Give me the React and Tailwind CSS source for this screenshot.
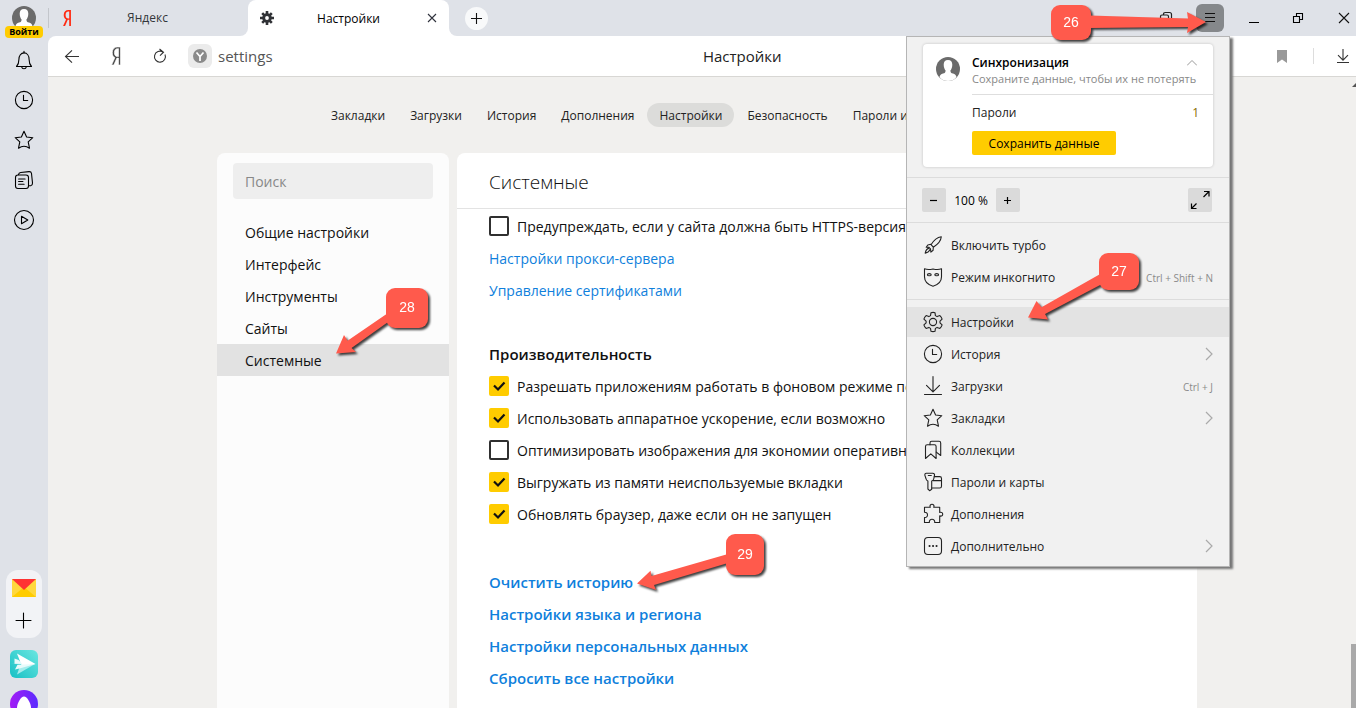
import React from "react";
import { FaYandex } from "react-icons/fa";

function Icon({ size = 24, width = 1.1, className = "", children }) {
  return (
    <svg
      width={size}
      height={size}
      viewBox="0 0 24 24"
      fill="none"
      stroke="currentColor"
      strokeWidth={width}
      strokeLinejoin="round"
      strokeLinecap="round"
      className={"shrink-0 " + className}
      aria-hidden="true"
    >
      {children}
    </svg>
  );
}

const starPath =
  "M12 3.2l2.600 5.800 6.200.700-4.600 4.200 1.300 6.300c-1.800-1.300-3.500-2-5.500-2s-3.700.700-5.500 2l1.300-6.300-4.600-4.200 6.200-.700z";

const BellIcon = () => (
  <Icon>
    <path d="M4.500 18.500c1.700-1.800 2.400-3.200 2.400-7.100C6.900 7.600 9 4.900 12 4.900s5.100 2.700 5.100 6.500c0 3.900.7 5.300 2.400 7.100z" />
    <path d="M12 3.300v1.500M9.700 18.800c.2 1.300 1.100 2 2.300 2s2.100-.7 2.300-2" />
  </Icon>
);
const ClockIcon = () => (
  <Icon>
    <circle cx="12" cy="12" r="8.6" />
    <path d="M11.500 7.200v5.300h4.200" />
  </Icon>
);
const StarIcon = () => (
  <Icon>
    <path d={starPath} />
  </Icon>
);
const NotesIcon = () => (
  <Icon>
    <rect x="3.500" y="7" width="13" height="13.500" rx="2.500" />
    <path d="M6.500 6.700c.3-1.700 1-2 2.200-2.200l8.300-.9c1.600-.1 2.300.5 2.500 1.900l1 9.500c.1 1.700-.5 2.400-1.800 2.700h-1.600M6.600 11h6.500M6.600 13.500h4.300M6.600 16.200h5.500" />
  </Icon>
);
const PlayIcon = () => (
  <Icon>
    <circle cx="12" cy="12" r="9.5" />
    <path d="M9.500 8.300l6.300 3.700-6.300 3.700z" />
  </Icon>
);
const RocketIcon = () => (
  <Icon>
    <path d="M20.300 3.700c-4.300.6-7.600 3.600-10.300 8l2.300 2.500c4.600-2.900 7.600-6.200 8-10.500zM9.800 11.300l-3 .7-1.600 2.300 2.900.1M12.300 14.300l-.2 3-2.200 1.800-.4-3.300M8 14.400l1.500 1.400M7.600 15.400c-1.700.4-2.800 2.200-3.400 4.700 2.400-.6 4.100-1.700 4.700-3.500" />
  </Icon>
);
const MaskIcon = () => (
  <Icon>
    <path d="M3.500 3.800c2.500 1 5 1 8.500.2 3.500.8 6 .8 8.500-.2v8c0 4.500-3.500 8-8.500 9.400-5-1.400-8.500-4.900-8.500-9.400z" />
    <ellipse cx="8.300" cy="9.700" rx="1.900" ry="1.100" />
    <ellipse cx="15.700" cy="9.700" rx="1.900" ry="1.100" />
  </Icon>
);
const GearIcon = () => (
  <Icon>
    <circle cx="12" cy="12" r="3.600" />
    <path d="M10 2.700c1.300-.4 2.900-.4 4 0l.4 2.900 1.700 1 2.800-1c1 .9 1.800 2.100 2.200 3.500L19 11.200v1.700l2.100 2c-.4 1.400-1.200 2.600-2.200 3.500l-2.800-1-1.700 1-.4 2.900c-1.300.4-2.700.4-4 0l-.5-2.900-1.600-1-2.800 1c-1-.9-1.800-2.100-2.200-3.500l2.200-2v-1.700l-2.200-2.100c.4-1.400 1.200-2.600 2.200-3.500l2.800 1 1.600-1z" />
  </Icon>
);
const DownloadIcon = () => (
  <Icon>
    <path d="M12 2.500v15M5.500 11.300l6.500 6.500 6.500-6.500M3.500 20.500h17" />
  </Icon>
);
const CollectionsIcon = () => (
  <Icon>
    <path d="M4.500 20.500V8.500c0-1 .6-1.700 1.700-1.700h7.300c1 0 1.600.7 1.600 1.700v12l-5.300-4.600z" />
    <path d="M9 6.800V4.900c0-1.100.6-1.700 1.700-1.700h7.300c1.100 0 1.700.6 1.700 1.700v12.600l-4.400-3.400" />
  </Icon>
);
const KeyIcon = () => (
  <Icon>
    <path d="M5.300 3.200h6.500c1.300 0 1.900.9 1.700 2.100l-.8 3.700c-.2 1-1 1.700-2 2v8.300L8.600 20.700 6.900 19V11c-1-.3-1.600-1-1.800-2l-1.200-3.700c-.2-1.200.3-2.100 1.400-2.100zM7.300 5.500h3" />
    <path d="M13.300 6.600h5.400c1.200 0 1.800.7 1.800 1.800v7.800c0 1.200-.6 1.800-1.800 1.800h-8M12 10.600h8.300" />
  </Icon>
);
const PuzzleIcon = () => (
  <Icon>
    <path d="M3.500 5.200h5.800c-.8-1.600.3-2.900 1.700-2.900s2.500 1.300 1.700 2.900h6v5.200c2-.6 3 .5 3 1.800s-1 2.300-3 1.700v6.600h-5c.3-2-1-3.200-2.700-3.200s-2.900 1.200-2.600 3.200H3.500v-5c1.900.2 3-1 3-2.600s-1.100-2.700-3-2.600z" />
  </Icon>
);
const MoreIcon = () => (
  <Icon>
    <rect x="3.500" y="3.500" width="17" height="17" rx="3.500" />
    <path d="M8.500 12h.1M12 12h.1M15.500 12h.1" strokeWidth="2" />
  </Icon>
);

function Avatar() {
  return (
    <svg width="24" height="24" viewBox="0 0 24 24" className="shrink-0" aria-hidden="true">
      <defs>
        <clipPath id="face">
          <circle cx="12" cy="12" r="12" />
        </clipPath>
      </defs>
      <g clipPath="url(#face)">
        <rect width="24" height="24" fill="#6b6b6b" />
        <path
          d="M12 3c3 0 4.300 2 4.300 4.700 0 2.600-.8 4.500-1.900 5.700.1 2 .8 2.600 2.600 3.200 2 .7 3 1.500 3.500 3.400L17 24H7l-3.500-4c.5-1.900 1.500-2.700 3.500-3.400 1.800-.6 2.500-1.200 2.600-3.200-1.100-1.200-1.900-3.100-1.900-5.700C7.700 5 9 3 12 3z"
          fill="#fff"
        />
      </g>
    </svg>
  );
}

function SideBar() {
  const items = [
    ["Уведомления", BellIcon],
    ["История", ClockIcon],
    ["Закладки", StarIcon],
    ["Заметки", NotesIcon],
    ["Видео", PlayIcon],
  ];
  return (
    <aside className="flex w-12 shrink-0 flex-col items-center">
      <button className="flex h-10 flex-col items-center pt-1.5">
        <Avatar />
        <span className="-mt-1 rounded bg-[#ffcc00] px-1 text-[9px] leading-3 font-bold text-black">
          Войти
        </span>
      </button>
      {items.map(([label, Glyph]) => (
        <button key={label} aria-label={label} className="flex h-10 w-full items-center justify-center">
          <Glyph />
        </button>
      ))}
      <div className="mt-auto -mb-2.5 flex flex-col items-center gap-3">
        <div className="flex w-9 flex-col items-center rounded-xl bg-[#f2f3f6] pt-2 pb-1.5">
          <button aria-label="Почта" className="flex h-5 items-center">
            <svg width="24" height="18" viewBox="0 0 24 18" aria-hidden="true">
              <rect width="24" height="18" fill="#ffd83d" />
              <path d="M0 18L12 8l12 10z" fill="#ffcc00" />
              <path d="M0 0h24L12 11z" fill="#ff3333" />
            </svg>
          </button>
          <button aria-label="Добавить" className="flex h-[34px] items-end justify-center">
            <Icon width={1.1}>
              <path d="M11.500 5v15M4 12.500h15" />
            </Icon>
          </button>
        </div>
        <button aria-label="Мессенджер">
          <svg width="28" height="28" viewBox="0 0 28 28" aria-hidden="true">
            <defs>
              <linearGradient id="sea" x1="1" y1="0" x2="0" y2="1">
                <stop offset="0" stopColor="#6be6e0" />
                <stop offset="1" stopColor="#16c0c4" />
              </linearGradient>
            </defs>
            <rect width="28" height="28" rx="6" fill="url(#sea)" />
            <path d="M7 24.500L25 14l-15 2z" fill="#a6ecec" />
            <path d="M7 3.500L25.500 14 12 16.500z" fill="#fff" />
            <path d="M4.500 8.500l4 1.500 4 4-12-.2h4zM5 19.500l2.500-4.700 18-.8-16 4.500z" fill="#e8fbfb" />
          </svg>
        </button>
        <button aria-label="Алиса">
          <svg width="28" height="28" viewBox="0 0 28 28" aria-hidden="true">
            <defs>
              <linearGradient id="violet" x1="0" y1="0" x2="1" y2="0">
                <stop offset="0" stopColor="#a31cf5" />
                <stop offset="1" stopColor="#5a2bff" />
              </linearGradient>
            </defs>
            <circle cx="14" cy="14" r="14" fill="url(#violet)" />
            <path d="M14 6.500c3 0 7 6.500 7 11.500 0 3-3 4-7 4s-7-1-7-4c0-5 4-11.500 7-11.500z" fill="#fff" />
          </svg>
        </button>
      </div>
    </aside>
  );
}

function TabStrip() {
  return (
    <div className="flex h-9 shrink-0 bg-white">
      <div className="flex w-[200px] items-center rounded-br-lg bg-[#dfe2e8]">
        <span className="h-5 w-px bg-[#c3c6cb]" />
        <FaYandex className="ml-2 h-4 w-5 shrink-0 text-[#ff2a12]" />
        <span className="flex-1 pr-[30px] text-center text-[12px] text-[#33363b]">Яндекс</span>
      </div>
      <div className="w-[201px] bg-[#dfe2e8]">
        <div className="flex h-full items-center rounded-t-lg bg-white pr-2.5 pl-3">
          <svg width="14" height="14" viewBox="0 0 14 14" className="shrink-0" aria-hidden="true">
            <g stroke="#303236" strokeWidth="2.600">
              <path d="M7 0v14M0 7h14M2.200 2.200l9.600 9.600M11.800 2.200l-9.600 9.600" />
            </g>
            <circle cx="7" cy="7" r="4.800" fill="#303236" />
            <circle cx="7" cy="7" r="1.900" fill="#fff" />
          </svg>
          <span className="flex-1 pt-px pr-0.5 text-center text-[12px] text-black">Настройки</span>
          <button aria-label="Закрыть вкладку">
            <svg width="14" height="14" viewBox="0 0 14 14" stroke="#30333d" strokeWidth="1.100" aria-hidden="true">
              <path d="M3 3l8 8M11 3l-8 8" />
            </svg>
          </button>
        </div>
      </div>
      <div className="flex flex-1 items-center rounded-bl-lg bg-[#dfe2e8] pl-4">
        <button aria-label="Новая вкладка" className="flex size-[23px] items-center justify-center rounded-full bg-[#f8f9fa]">
          <svg width="13" height="13" viewBox="0 0 13 13" stroke="#111" strokeWidth="1.100" aria-hidden="true">
            <path d="M6.500 1v11M1 6.500h11" />
          </svg>
        </button>
        <div className="ml-auto flex items-center">
          <button aria-label="Коллекции" className="mr-[23px]">
            <svg width="14" height="14" viewBox="0 0 14 14" fill="none" stroke="#222" strokeWidth="1.200" aria-hidden="true">
              <path d="M1.500 13V5.500c0-1 .5-1.500 1.500-1.500h5c1 0 1.500.5 1.500 1.500V13M4.500 3.500c0-1.300.6-2 1.800-2h4.200c1.300 0 2 .7 2 2V10" />
            </svg>
          </button>
          <button aria-label="Меню" className="mr-6 flex size-7 items-center justify-center rounded-md bg-[#85888b]">
            <svg width="12" height="12" viewBox="0 0 12 12" stroke="#111" aria-hidden="true">
              <path d="M1 1.500h10M1 5.500h10M1 9.500h10" />
            </svg>
          </button>
          <button aria-label="Свернуть" className="mr-8">
            <svg width="12" height="12" viewBox="0 0 12 12" stroke="#000" aria-hidden="true">
              <path d="M1 10.500h10" />
            </svg>
          </button>
          <button aria-label="Развернуть" className="mr-[34px]">
            <svg width="12" height="12" viewBox="0 0 12 12" fill="none" stroke="#000" strokeWidth="1.100" aria-hidden="true">
              <path d="M1.500 4.500h6v6h-6zM4.500 4.500v-3h6v6h-3" />
            </svg>
          </button>
          <button aria-label="Закрыть" className="mr-1.5">
            <svg width="12" height="12" viewBox="0 0 12 12" stroke="#111" strokeWidth="1.100" aria-hidden="true">
              <path d="M1 1l10 10M11 1L1 11" />
            </svg>
          </button>
        </div>
      </div>
    </div>
  );
}

function ToolBar() {
  return (
    <div className="flex h-[41px] shrink-0 items-center rounded-tl-lg border-b border-[#d8d7d4] bg-white pl-4 text-[#333]">
      <button aria-label="Назад">
        <svg width="16" height="16" viewBox="0 0 16 16" fill="none" stroke="currentColor" strokeWidth="1.100" aria-hidden="true">
          <path d="M15 8.500H1.500M8 2.300L1.500 8.500 8 14.700" />
        </svg>
      </button>
      <button aria-label="Яндекс" className="ml-[26px]">
        <FaYandex className="h-[18px] w-5 stroke-white text-[#444] [stroke-width:18]" />
      </button>
      <button aria-label="Обновить" className="ml-[26px]">
        <svg width="16" height="16" viewBox="0 0 16 16" fill="none" stroke="currentColor" strokeWidth="1.100" aria-hidden="true">
          <path d="M13 6.500A5.500 5.500 0 1 1 11 4.100M7.500 1l4 3.200-3.500 3.500" />
        </svg>
      </button>
      <button aria-label="Сведения о сайте" className="ml-5 flex size-6 items-center justify-center rounded-md bg-[#ebebeb]">
        <svg width="14" height="14" viewBox="0 0 14 14" fill="none" aria-hidden="true">
          <circle cx="7" cy="7" r="7" fill="#8a8a8a" />
          <path d="M3.500 3.500L7 7.500l3.500-4M7 7.500V12" stroke="#fff" strokeWidth="1.700" />
        </svg>
      </button>
      <a href="#settings" className="ml-1.5 text-[15px] text-[#555]">
        settings
      </a>
      <h1 className="flex-1 text-center text-[15px] text-[#222]">Настройки</h1>
      <div className="flex w-36 items-center justify-end">
        <button aria-label="В закладки">
          <svg width="10" height="13" viewBox="0 0 10 13" fill="#999" aria-hidden="true">
            <path d="M0 0h10v13L5 9.500 0 13z" />
          </svg>
        </button>
        <span className="ml-[26px] h-4 w-px bg-[#ddd]" />
        <button aria-label="Загрузки" className="mr-1.5 ml-[22px]">
          <svg width="14" height="16" viewBox="0 0 14 16" fill="none" stroke="currentColor" strokeWidth="1.100" aria-hidden="true">
            <path d="M7 1v11M2 7.200l5 5 5-5M1 14.500h12" />
          </svg>
        </button>
      </div>
    </div>
  );
}

function Check({ label, checked }) {
  return (
    <label className="flex h-8 items-center gap-2 whitespace-nowrap">
      <span className="grid size-5 shrink-0 place-items-center">
        <input
          type="checkbox"
          defaultChecked={checked}
          className="peer size-5 appearance-none rounded-[2px] border-2 border-[#303030] bg-white [grid-area:1/1] checked:border-[#ffcc00] checked:bg-[#ffcc00]"
        />
        <svg
          width="14"
          height="12"
          viewBox="0 0 14 12"
          fill="none"
          stroke="#111"
          strokeWidth="2.200"
          className="pointer-events-none invisible [grid-area:1/1] peer-checked:visible"
          aria-hidden="true"
        >
          <path d="M2 5.500l4 4 6.500-7" />
        </svg>
      </span>
      {label}
    </label>
  );
}

function TextLink({ children }) {
  return (
    <a href="#open" className="flex h-8 w-fit items-center text-[#0f7fdc]">
      {children}
    </a>
  );
}

function SettingsPage() {
  const nav = ["Закладки", "Загрузки", "История", "Дополнения", "Настройки", "Безопасность", "Пароли и карты"];
  const sections = ["Общие настройки", "Интерфейс", "Инструменты", "Сайты", "Системные"];
  return (
    <div className="flex min-h-0 flex-1 bg-[#f1f0ee]">
      <main className="flex min-w-0 flex-1 flex-col items-center pt-[26px] pl-[15px]">
        <div className="flex w-full max-w-[980px] flex-1 flex-col">
          <nav className="flex h-6 gap-px pl-[102px] text-[12px] text-[#222]">
            {nav.map((item) => (
              <a
                key={item}
                href="#tab"
                className={
                  item === "Настройки"
                    ? "flex items-center rounded-full bg-[#dcdcda] px-3 pt-0.5 whitespace-nowrap"
                    : "flex items-center px-3 pt-0.5 whitespace-nowrap"
                }
              >
                {item}
              </a>
            ))}
          </nav>
          <div className="mt-[26px] flex flex-1 gap-2 text-[14px] text-[#111]">
            <aside className="w-[232px] shrink-0 rounded-t-lg bg-[#fcfcfc] pt-2.5">
              <input
                type="search"
                aria-label="Поиск"
                placeholder="Поиск"
                className="mx-4 mb-[17px] block h-9 w-[200px] rounded bg-[#eeeeee] px-3 outline-none placeholder:text-[#888]"
              />
              {sections.map((item) => (
                <a
                  key={item}
                  href="#section"
                  className={
                    item === "Системные" ? "flex h-8 items-center bg-[#e2e2e2] px-7" : "flex h-8 items-center px-7"
                  }
                >
                  {item}
                </a>
              ))}
            </aside>
            <section className="min-w-0 flex-1 overflow-hidden rounded-t-lg bg-white">
              <h2 className="mb-px flex h-14 items-center border-b border-[#e3e3e3] px-8 pt-1 text-[19px] font-light">
                Системные
              </h2>
              <div className="px-8">
                <Check label="Предупреждать, если у сайта должна быть HTTPS-версия" />
                <TextLink>Настройки прокси-сервера</TextLink>
                <TextLink>Управление сертификатами</TextLink>
                <h3 className="mt-8 flex h-8 items-center text-[15px] font-semibold">Производительность</h3>
                <Check checked label="Разрешать приложениям работать в фоновом режиме после" />
                <Check checked label="Использовать аппаратное ускорение, если возможно" />
                <Check label="Оптимизировать изображения для экономии оперативной" />
                <Check checked label="Выгружать из памяти неиспользуемые вкладки" />
                <Check checked label="Обновлять браузер, даже если он не запущен" />
                <div className="mt-9 text-[15px] font-semibold">
                  <TextLink>Очистить историю</TextLink>
                  <TextLink>Настройки языка и региона</TextLink>
                  <TextLink>Настройки персональных данных</TextLink>
                  <TextLink>Сбросить все настройки</TextLink>
                </div>
              </div>
            </section>
          </div>
        </div>
      </main>
      <div className="flex w-[5px] flex-col justify-between">
        <svg width="5" height="12" viewBox="0 0 5 12" fill="#555" aria-hidden="true">
          <path d="M5 6v4H1z" />
        </svg>
        <span className="h-16 bg-[#a9a9a9]" />
      </div>
    </div>
  );
}

function MenuItem({ icon: Glyph, label, hint, arrow, active }) {
  return (
    <button
      className={
        active
          ? "flex h-[30px] items-center bg-[#e3e3e3] pr-4 pl-3.5 text-left"
          : "flex h-[30px] items-center pr-4 pl-3.5 text-left"
      }
    >
      <Glyph />
      <span className="ml-1.5 flex-1 pt-0.5">{label}</span>
      {hint && <span className="pt-0.5 text-[10px] text-[#8a8a8a]">{hint}</span>}
      {arrow && (
        <svg width="8" height="14" viewBox="0 0 8 14" fill="none" stroke="#aaa" strokeWidth="1.200" aria-hidden="true">
          <path d="M1 1l6 6-6 6" />
        </svg>
      )}
    </button>
  );
}

function MainMenu() {
  return (
    <div className="absolute top-9 right-[126px] flex w-[324px] flex-col border border-[#b5b5b5] bg-[#f1f1f1] pb-[5px] text-[12px] text-[#222] shadow-[3px_2px_2px_#777]">
      <div className="mx-4 mt-[7px] rounded bg-white pt-[11px] pb-3 shadow-[0_0_3px_rgba(0,0,0,0.2)]">
        <div className="flex gap-3 pl-[13px]">
          <span className="pt-0.5">
            <Avatar />
          </span>
          <div className="flex-1">
            <div className="flex items-center justify-between pr-4">
              <strong className="leading-4 font-semibold text-black">Синхронизация</strong>
              <svg width="10" height="6" viewBox="0 0 10 6" fill="none" stroke="#999" aria-hidden="true">
                <path d="M0 5.500l5-5 5 5" />
              </svg>
            </div>
            <p className="border-b border-[#dedede] pb-[7px] text-[11px] leading-4 whitespace-nowrap text-[#888]">
              Сохраните данные, чтобы их не потерять
            </p>
            <div className="flex h-9 items-center justify-between pr-3.5">
              <span>Пароли</span>
              <span className="text-[#8a6d00]">1</span>
            </div>
            <button className="flex h-6 w-36 items-center justify-center rounded-[2px] bg-[#ffcc00] pt-0.5 text-black">
              Сохранить данные
            </button>
          </div>
        </div>
      </div>
      <div className="mt-2.5 flex h-[46px] items-center border-y border-[#dcdcdc] pr-[17px] pl-[15px] text-black">
        <button aria-label="Уменьшить" className="flex size-6 items-center justify-center rounded-[2px] bg-[#dadada]">
          <svg width="8" height="9" viewBox="0 0 8 9" stroke="#000" strokeWidth="1.200" aria-hidden="true">
            <path d="M0 4.500h7" />
          </svg>
        </button>
        <span className="w-[50px] pt-0.5 text-center">100 %</span>
        <button aria-label="Увеличить" className="flex size-6 items-center justify-center rounded-[2px] bg-[#dadada]">
          <svg width="8" height="9" viewBox="0 0 8 9" stroke="#000" strokeWidth="1.200" aria-hidden="true">
            <path d="M0 4.500h7M3.500 1v7" />
          </svg>
        </button>
        <button aria-label="Во весь экран" className="ml-auto rounded-[2px] bg-[#dadada]">
          <svg width="24" height="24" viewBox="0 0 24 24" fill="none" stroke="#000" strokeWidth="1.200" aria-hidden="true">
            <path d="M15.500 9l5-5M16 3.500h5v5M8.500 15.500l-5 5M3.500 15.500v5h5" />
          </svg>
        </button>
      </div>
      <div className="flex flex-col gap-0.5 border-b border-[#dcdcdc] py-[7px]">
        <MenuItem icon={RocketIcon} label="Включить турбо" />
        <MenuItem icon={MaskIcon} label="Режим инкогнито" hint="Ctrl + Shift + N" />
      </div>
      <div className="mt-[7px] flex flex-col gap-0.5">
        <MenuItem icon={GearIcon} label="Настройки" active />
        <MenuItem icon={ClockIcon} label="История" arrow />
        <MenuItem icon={DownloadIcon} label="Загрузки" hint="Ctrl + J" />
        <MenuItem icon={StarIcon} label="Закладки" arrow />
        <MenuItem icon={CollectionsIcon} label="Коллекции" />
        <MenuItem icon={KeyIcon} label="Пароли и карты" />
        <MenuItem icon={PuzzleIcon} label="Дополнения" />
        <MenuItem icon={MoreIcon} label="Дополнительно" arrow />
      </div>
    </div>
  );
}

function Callout({ place, width, height, arrow, box, children }) {
  return (
    <div className={"pointer-events-none absolute " + place}>
      <svg
        width={width}
        height={height}
        viewBox={"0 0 " + width + " " + height}
        className="overflow-visible drop-shadow-[2px_2px_1px_rgba(0,0,0,0.75)]"
        fill="#ff5a4c"
        aria-hidden="true"
      >
        <path d={arrow} />
        <rect x={box[0]} y={box[1]} width={box[2]} height={box[3]} rx="9" />
        <text
          x={box[0] + box[2] / 2}
          y={box[1] + box[3] / 2 + 4}
          textAnchor="middle"
          fill="#fff"
          className="font-['Liberation_Sans',sans-serif] text-[14px]"
        >
          {children}
        </text>
      </svg>
    </div>
  );
}

export default function App() {
  return (
    <div className="relative flex h-screen overflow-hidden bg-[#dfe2e8] font-['Open_Sans','Noto_Sans',sans-serif] text-black">
      <SideBar />
      <div className="flex min-w-0 flex-1 flex-col">
        <TabStrip />
        <ToolBar />
        <SettingsPage />
      </div>
      <MainMenu />
      <Callout
        place="top-[5px] right-[150px]"
        width={155}
        height={36}
        arrow="M38 10.500L137 13.500 136 7 155 17 136 28 137 22 38 23z"
        box={[0, 0, 40, 35]}
      >
        26
      </Callout>
      <Callout
        place="top-[253px] right-[217px]"
        width={111}
        height={67}
        arrow="M0 64.500L8.500 48 13.500 54.300 74 20 74 31 17 61 20 66.500z"
        box={[71, 0, 40, 37]}
      >
        27
      </Callout>
      <Callout
        place="top-[288px] left-[336px]"
        width={92}
        height={65}
        arrow="M0 65.500L8 47 11.500 52.700 52 25 52 34 15.500 60 20 64z"
        box={[50, 0, 42, 40]}
      >
        28
      </Callout>
      <Callout
        place="top-[534px] left-[637px]"
        width={127}
        height={56}
        arrow="M0 49.500L13.500 36.700 14.500 42 91 20 91 29 17 51 19 56z"
        box={[89, 0, 38, 41]}
      >
        29
      </Callout>
    </div>
  );
}
